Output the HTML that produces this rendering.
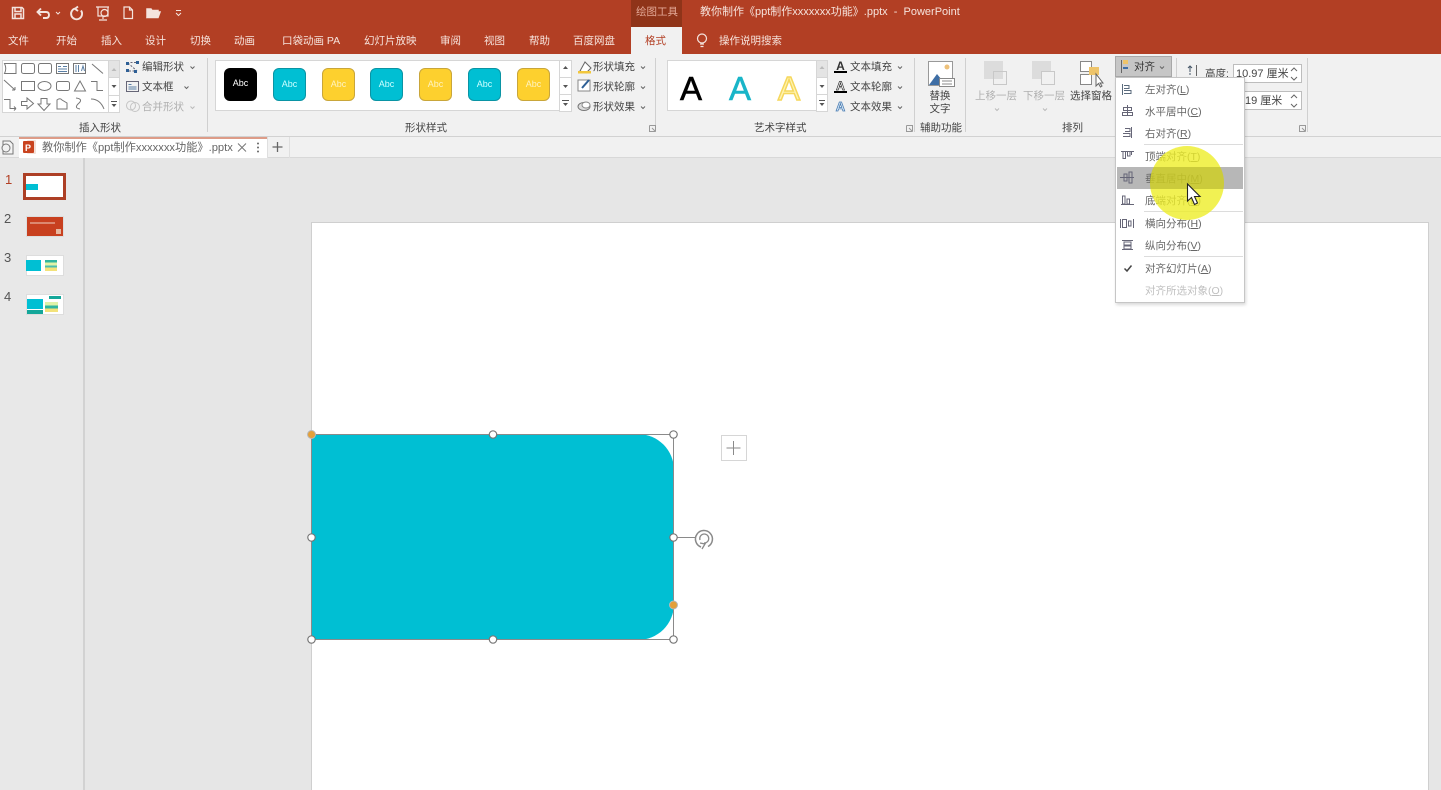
<!DOCTYPE html>
<html lang="zh"><head><meta charset="utf-8"><title>PowerPoint</title>
<style>
html,body{margin:0;padding:0;background:#e6e6e6;height:790px;overflow:hidden}
body{width:1441px;height:790px;position:relative;overflow:hidden;font-family:"Liberation Sans","Noto Sans CJK SC",sans-serif;font-size:10.5px;color:#444;filter:blur(.3px)}
div{position:absolute;box-sizing:border-box}
.t{white-space:nowrap;line-height:16px;height:16px;margin-top:1px}
.n{margin-top:0}
.w{color:#f6e3dc}
.g{color:#b0b0b0}
.m{color:#666}
.c{text-align:center}
svg{position:absolute;left:0;top:0}
</style></head><body>
<div style="left:0;top:0;width:1441px;height:54px;background:#b23f24"></div>
<div style="left:631px;top:0;width:51px;height:27px;background:#8f3419"></div>
<div style="left:631px;top:27px;width:51px;height:27px;background:#f1f1f1"></div>
<div style="left:0;top:54px;width:1441px;height:83px;background:#f1f1f1;border-bottom:1px solid #d2d2d2"></div>
<div style="left:0;top:137px;width:1441px;height:21px;background:#f1f1f1;border-bottom:1px solid #d8d8d8"></div>
<div style="left:19px;top:137px;width:248px;height:21px;background:#fff;border-top:2px solid #dd9c88"></div>
<div style="left:0;top:158px;width:85px;height:632px;background:#e8e8e8;border-right:2px solid #d2d2d2"></div>
<div style="left:311px;top:222px;width:1118px;height:568px;background:#fff;border:1px solid #cfcfcf;border-bottom:0"></div>

<!-- title -->
<div class="t w n" style="left:636px;top:4px;color:#e3a896">绘图工具</div>
<div class="t w n" style="left:700px;top:4px;font-size:11px">教你制作《ppt制作xxxxxxx功能》.pptx&nbsp; -&nbsp; PowerPoint</div>
<!-- tabs -->
<div class="t w" style="left:8px;top:32px">文件</div>
<div class="t w" style="left:56px;top:32px">开始</div>
<div class="t w" style="left:101px;top:32px">插入</div>
<div class="t w" style="left:145px;top:32px">设计</div>
<div class="t w" style="left:190px;top:32px">切换</div>
<div class="t w" style="left:234px;top:32px">动画</div>
<div class="t w" style="left:282px;top:32px">口袋动画 PA</div>
<div class="t w" style="left:364px;top:32px">幻灯片放映</div>
<div class="t w" style="left:440px;top:32px">审阅</div>
<div class="t w" style="left:484px;top:32px">视图</div>
<div class="t w" style="left:529px;top:32px">帮助</div>
<div class="t w" style="left:573px;top:32px">百度网盘</div>
<div class="t" style="left:645px;top:32px;color:#b23f24">格式</div>
<div class="t w" style="left:719px;top:32px">操作说明搜索</div>

<!-- galleries -->
<div style="left:2px;top:60px;width:118px;height:53px;background:#fff;border:1px solid #d6d6d6"></div>
<div style="left:215px;top:60px;width:357px;height:51px;background:#fff;border:1px solid #d6d6d6"></div>
<div style="left:667px;top:60px;width:161px;height:51px;background:#fff;border:1px solid #d6d6d6"></div>

<!-- ribbon text -->
<div class="t" style="left:142px;top:58px">编辑形状</div>
<div class="t" style="left:142px;top:78px">文本框</div>
<div class="t g" style="left:142px;top:98px">合并形状</div>
<div class="t" style="left:79px;top:119px">插入形状</div>
<div class="t" style="left:405px;top:119px">形状样式</div>
<div class="t" style="left:593px;top:58px">形状填充</div>
<div class="t" style="left:593px;top:78px">形状轮廓</div>
<div class="t" style="left:593px;top:98px">形状效果</div>
<div class="t" style="left:754px;top:119px">艺术字样式</div>
<div class="t" style="left:850px;top:58px">文本填充</div>
<div class="t" style="left:850px;top:78px">文本轮廓</div>
<div class="t" style="left:850px;top:98px">文本效果</div>
<div class="t c" style="left:925px;top:87px;width:30px">替换</div>
<div class="t c" style="left:925px;top:100px;width:30px">文字</div>
<div class="t" style="left:920px;top:119px">辅助功能</div>
<div class="t g" style="left:975px;top:87px">上移一层</div>
<div class="t g" style="left:1023px;top:87px">下移一层</div>
<div class="t" style="left:1070px;top:87px">选择窗格</div>
<div class="t" style="left:1062px;top:119px">排列</div>

<!-- Style swatches -->
<div class="t c n" style="left:224px;top:68px;width:33px;height:33px;background:#000;border-radius:6px;color:#fff;line-height:31px;font-size:9px">Abc</div>
<div class="t c n" style="left:273px;top:68px;width:33px;height:33px;background:#00bfd3;border:1px solid #0a94a4;border-radius:6px;color:#cff;line-height:30px;font-size:9px">Abc</div>
<div class="t c n" style="left:322px;top:68px;width:33px;height:33px;background:#fdd02e;border:1px solid #c9a63a;border-radius:6px;color:#fff3c0;line-height:30px;font-size:9px">Abc</div>
<div class="t c n" style="left:370px;top:68px;width:33px;height:33px;background:#00bfd3;border:1px solid #0a94a4;border-radius:6px;color:#cff;line-height:30px;font-size:9px">Abc</div>
<div class="t c n" style="left:419px;top:68px;width:33px;height:33px;background:#fdd02e;border:1px solid #c9a63a;border-radius:6px;color:#fff3c0;line-height:30px;font-size:9px">Abc</div>
<div class="t c n" style="left:468px;top:68px;width:33px;height:33px;background:#00bfd3;border:1px solid #0a94a4;border-radius:6px;color:#cff;line-height:30px;font-size:9px">Abc</div>
<div class="t c n" style="left:517px;top:68px;width:33px;height:33px;background:#fdd02e;border:1px solid #c9a63a;border-radius:6px;color:#fff3c0;line-height:30px;font-size:9px">Abc</div>

<!-- WordArt -->
<div class="t n" style="left:680px;top:72px;font-size:33px;line-height:34px;height:34px;color:#000;-webkit-text-stroke:.6px #000">A</div>
<div class="t n" style="left:729px;top:72px;font-size:33px;line-height:34px;height:34px;color:#19b5c8;-webkit-text-stroke:.6px #19b5c8">A</div>
<div class="t n" style="left:778px;top:72px;font-size:33px;line-height:34px;height:34px;color:#fff3b0;-webkit-text-stroke:1.5px #f5d75c">A</div>

<!-- size -->
<div class="t" style="left:1205px;top:65px">高度:</div>
<div style="left:1233px;top:64px;width:69px;height:19px;background:#fff;border:1px solid #bdbdbd"></div>
<div style="left:1233px;top:91px;width:69px;height:19px;background:#fff;border:1px solid #bdbdbd"></div>
<div class="t" style="left:1236px;top:65px;font-size:11px">10.97 厘米</div>
<div class="t" style="left:1245px;top:92px;font-size:11px">19 厘米</div>

<!-- Align button -->
<div style="left:1115px;top:56px;width:57px;height:21px;background:#c6c6c6;border:1px solid #a8a8a8"></div>
<div class="t" style="left:1134px;top:58px;color:#333">对齐</div>

<!-- doc tab -->
<div class="t m" style="left:42px;top:139px;font-size:11.2px">教你制作《ppt制作xxxxxxx功能》.pptx</div>

<!-- thumbs -->
<div class="t" style="left:5px;top:171px;font-size:13px;color:#b23f24">1</div>
<div class="t" style="left:4px;top:210px;font-size:13px;color:#555">2</div>
<div class="t" style="left:4px;top:249px;font-size:13px;color:#555">3</div>
<div class="t" style="left:4px;top:288px;font-size:13px;color:#555">4</div>
<div style="left:23px;top:173px;width:43px;height:27px;background:#fff;border:3px solid #ad3f25"></div>
<div style="left:26px;top:184px;width:12px;height:6px;background:#00bfd3"></div>
<div style="left:26px;top:216px;width:38px;height:21px;background:#c8401f;border:1px solid #ddd"></div>
<div style="left:26px;top:255px;width:38px;height:21px;background:#fff;border:1px solid #ddd"></div>
<div style="left:26px;top:294px;width:38px;height:21px;background:#fff;border:1px solid #ddd"></div>
<div style="left:26px;top:260px;width:15px;height:11px;background:#00bfd3"></div>
<div style="left:45px;top:260px;width:12px;height:11px;background:linear-gradient(#2fb5a0 0 25%,#dff2a8 25% 50%,#4bbfb0 50% 70%,#f3e27a 70%)"></div>
<div style="left:27px;top:299px;width:16px;height:10px;background:#00bfd3"></div>
<div style="left:27px;top:310px;width:16px;height:4px;background:#14a79a"></div>
<div style="left:45px;top:302px;width:13px;height:10px;background:linear-gradient(#dff2a8 0 35%,#2fb5a0 35% 65%,#f3e27a 65%)"></div>
<div style="left:49px;top:296px;width:12px;height:3px;background:#14a79a"></div>

<!-- main shape -->
<div style="left:312px;top:434px;width:362px;height:206px;background:#00bfd3;border-radius:0 36px 36px 0"></div>
<div style="left:721px;top:435px;width:26px;height:26px;border:1px solid #d6d6d6;background:#fff"></div>

<!-- Icons -->
<svg width="1441" height="790" viewBox="0 0 1441 790" fill="none">
<!-- QAT -->
<g stroke="#f4e4de" stroke-width="1.500">
<path d="M12.500 7.500H22L23.500 9V18.500H12.500Z"/><path d="M15 7.500V11.500H21V7.500M15 18.500V14H21V18.500" />
<path d="M38 12 H46 Q49 12 49 15 Q49 18 46 18 H43M41 8.500 L37.500 12 L41 15.500" stroke-width="1.900"/>
<path d="M56 12l2 2 2-2" stroke-width="1"/>
<path d="M75 8.500 A5.500 5.500 0 1 0 81 10.500M78 6.500 L75 8.800 L78 11" stroke-width="1.900"/>
<path d="M96 7H109M98 7V16H108V7M103 16V19M99 20H107" stroke-width="1.200"/><circle cx="104.500" cy="13" r="3.500" stroke-width="1.200"/>
<path d="M124 7H129.500L132.500 10V18.500H124ZM129.500 7V10H132.500" stroke-width="1.200"/>
<path d="M147 17V9H151L152 10.500H158V12M147 17.500L149 12H160L158 17.500Z" fill="#f4e4de"/>
<path d="M176 10.500H181M176 13L178.500 15.500L181 13" stroke-width="1"/>
<circle cx="702" cy="38.500" r="4.500" stroke-width="1.200"/><path d="M700 44H704M700.500 46.500H703.500" stroke-width="1.200"/>
</g>
<!-- rules between ribbon groups -->
<g stroke="#d0d0d0"><path d="M207.500 58V132M655.500 58V132M914.500 58V132M965.500 58V132M1176.500 58V132M1307.500 58V132"/></g>
<!-- gallery scrollers -->
<g stroke="#d6d6d6" fill="#fff">
<rect x="108.500" y="60.500" width="11" height="17" fill="#e4e4e4"/><rect x="108.500" y="77.500" width="11" height="18"/><rect x="108.500" y="95.500" width="11" height="17"/>
<rect x="559.500" y="60.500" width="12" height="17"/><rect x="559.500" y="77.500" width="12" height="17"/><rect x="559.500" y="94.500" width="12" height="17"/>
<rect x="816.500" y="60.500" width="11" height="17" fill="#e4e4e4"/><rect x="816.500" y="77.500" width="11" height="17"/><rect x="816.500" y="94.500" width="11" height="17"/>
</g>
<g fill="#555">
<path d="M111.500 71l2.500-3 2.500 3z" fill="#bbb"/><path d="M111.500 85l2.500 3 2.500-3z"/><path d="M111 101h6v1h-6zM111.500 104l2.500 3 2.500-3z"/>
<path d="M563 69l2.500-3 2.500 3z"/><path d="M563 85l2.500 3 2.500-3z"/><path d="M562 100h7v1h-7zM563 103l2.500 3 2.500-3z"/>
<path d="M819.500 69l2.500-3 2.500 3z" fill="#bbb"/><path d="M819.500 85l2.500 3 2.500-3z"/><path d="M819 100h6v1h-6zM819.500 103l2.500 3 2.500-3z"/>
</g>
<!-- shape gallery -->
<g stroke="#777" stroke-width="1">
<path d="M4.500 63.500H16V73.500H4.500Q7 68.500 4.500 63.500Z"/>
<rect x="21.500" y="63.500" width="13" height="10" rx="2"/>
<rect x="38.500" y="63.500" width="13" height="10" rx="2"/>
<rect x="56.500" y="63.500" width="12" height="10"/><path d="M58 66.500h3M58 69h9M58 71.500h9M63 66.500h4" stroke="#5a7fa5"/>
<rect x="73.500" y="63.500" width="12" height="10"/><path d="M76 65v7M78.500 65v7M81.500 71l1.500-5 1.500 5" stroke="#5a7fa5"/>
<path d="M92 64L103 73.500"/>
<path d="M4 80L15 90M15 90H12M15 90V87" />
<rect x="21.500" y="81.500" width="13" height="9"/>
<ellipse cx="44.500" cy="86" rx="6.500" ry="4.500"/>
<rect x="56.500" y="81.500" width="13" height="9" rx="2"/>
<path d="M80 81L85.500 91H74.500Z"/>
<path d="M91 81.500H97V90.500H103"/>
<path d="M4 99.500H10V108.500H16M16 108.500l-2-2M16 108.500l-2 2"/>
<path d="M21.500 101.500H27V98L33.500 103.500L27 109V105.500H21.500Z"/>
<path d="M41 98.500H47V104H50L44 110.500L38 104H41Z"/>
<path d="M57 100Q60 97.500 62 100L67 103V109H57Z"/>
<path d="M76 98Q84 99 78 104Q74 108 80 109"/>
<path d="M91 99Q100 99 104 109"/>
</g>
<!-- side icons -->
<g stroke="#667" stroke-width="1">
<path d="M127 62.500H138M129 71H136M128 63L137 71" stroke-dasharray="2 1.500"/>
<g fill="#2e5f95" stroke="none"><rect x="126" y="62" width="3" height="3"/><rect x="136" y="61" width="3" height="3"/><rect x="134" y="70" width="3" height="3"/><rect x="126" y="69" width="3" height="3"/></g>
<rect x="126.500" y="81.500" width="12" height="10"/><path d="M128.500 84.500h3M128.500 87h8M128.500 89h8" stroke="#5a7fa5"/>
</g>
<g stroke="#c4c4c4"><circle cx="131" cy="105.500" r="4.500"/><circle cx="135" cy="107" r="4.500"/></g>
<g stroke="#666" stroke-width="1" fill="none">
<path d="M190.500 66.500l2 2 2-2M184.500 86.500l2 2 2-2M641 66.500l2 2 2-2M641 86.500l2 2 2-2M641 106.500l2 2 2-2M898 66.500l2 2 2-2M898 86.500l2 2 2-2M898 106.500l2 2 2-2M1160 66.500l2 2 2-2"/>
<path d="M190.500 106.500l2 2 2-2" stroke="#bbb"/><path d="M995 108.500l2 2 2-2M1043 108.500l2 2 2-2" stroke="#bbb"/>
</g>
<!-- fill/outline icons -->
<path d="M580 71L585 62L591 68L586 73Z" stroke="#666" fill="#fff"/><rect x="578" y="71" width="13" height="2.500" fill="#f2c73d"/>
<rect x="578" y="80" width="12" height="11" fill="#fff" stroke="#888"/><path d="M582 88L589 80" stroke="#2e5f95" stroke-width="2"/>
<ellipse cx="584" cy="106.500" rx="6" ry="4" fill="#ddd" stroke="#777"/><ellipse cx="586" cy="105" rx="4" ry="3" fill="#fff" stroke="#888"/>
<g font-family="Liberation Sans" font-weight="bold" font-size="13" text-anchor="middle">
<text x="840.500" y="70" fill="#333" font-size="12">A</text><rect x="834" y="71" width="13" height="2" fill="#000"/>
<text x="840.500" y="90" fill="#fff" stroke="#333" stroke-width=".7" font-size="12">A</text><rect x="834" y="91" width="13" height="2" fill="#000"/>
<text x="840.500" y="111" fill="#dbe8f5" stroke="#4b7fb5" stroke-width=".8">A</text>
</g>
<g stroke="#999"><path d="M649.500 125.500h6v6M649.500 125.500v6h6M652 128l3 3"/><path d="M906.500 125.500h6v6M906.500 125.500v6h6M909 128l3 3"/><path d="M1299.500 125.500h6v6M1299.500 125.500v6h6M1302 128l3 3"/></g>
<!-- alt text -->
<rect x="928.500" y="61.500" width="24" height="24" fill="#fff" stroke="#999"/><path d="M929 85L937 74L946 85Z" fill="#3e6ea5"/><circle cx="947" cy="67" r="2.500" fill="#eec17a"/><rect x="939.500" y="78.500" width="15" height="8" fill="#fff" stroke="#888"/><path d="M942 81h10M942 84h10" stroke="#888"/>
<!-- arrange -->
<rect x="984" y="61" width="19" height="18" fill="#dcdcdc"/><rect x="993.500" y="71.500" width="13" height="13" fill="none" stroke="#c8c8c8"/>
<rect x="1032" y="61" width="19" height="18" fill="#dcdcdc"/><rect x="1041.500" y="71.500" width="13" height="13" fill="#f1f1f1" stroke="#c8c8c8"/>
<rect x="1080.500" y="61.500" width="11" height="10" fill="#fff" stroke="#888"/><rect x="1080.500" y="74.500" width="11" height="10" fill="#fff" stroke="#888"/><rect x="1089" y="67" width="10" height="8" fill="#eec46a"/><path d="M1096 74V86L1098.500 83.500L1100.500 87L1102 86L1100 83H1103Z" fill="#fff" stroke="#666"/>
<!-- align icon -->
<path d="M1121.500 60V73" stroke="#666"/><rect x="1123" y="60" width="5" height="4" fill="#eec46a"/><path d="M1123 68H1128" stroke="#3e6ea5" stroke-width="2"/>
<!-- height icon -->
<path d="M1190 72V66M1188 68l2-2 2 2M1190 73v2" stroke="#456" /><path d="M1196.500 65V76" stroke="#666"/>
<g stroke="#666" fill="none"><path d="M1291 71l3-3 3 3M1291 77l3 3 3-3M1291 98l3-3 3 3M1291 104l3 3 3-3"/></g>
<!-- doc-tab icons -->
<path d="M3 141H10L13 144V154H3Z" stroke="#777" fill="#f4f4f4"/><circle cx="6" cy="148" r="4" stroke="#777" fill="#f1f1f1"/>
<rect x="27" y="140" width="9" height="14" rx="1" fill="#f3e0d8"/><rect x="23" y="141" width="11" height="12" rx="1" fill="#c9431f"/><text x="25" y="151" font-family="Liberation Sans" font-weight="bold" font-size="9" fill="#fff">P</text>
<path d="M238 143.500L246 151.500M246 143.500L238 151.500" stroke="#777"/>
<circle cx="258" cy="143.500" r="1" fill="#666"/><circle cx="258" cy="147.500" r="1" fill="#666"/><circle cx="258" cy="151.500" r="1" fill="#666"/>
<path d="M272.500 147H282.500M277.500 142V152" stroke="#666" stroke-width="1.300"/>
<path d="M267.500 137V158M289.500 137V158" stroke="#dfdfdf"/>
<!-- thumbnail deco -->
<path d="M30 223H55" stroke="#f0d0c0" stroke-width="1"/><rect x="56" y="229" width="5" height="5" fill="#e8b8a0"/>
<!-- selection -->
<rect x="311.500" y="434.500" width="362" height="205" stroke="#8a8a8a"/>
<path d="M674 537.500H695" stroke="#8a8a8a"/>
<g fill="#fff" stroke="#777" stroke-width="1.200">
<circle cx="493" cy="434.500" r="3.700"/><circle cx="673.500" cy="434.500" r="3.700"/><circle cx="311.500" cy="537.500" r="3.700"/><circle cx="673.500" cy="537.500" r="3.700"/><circle cx="311.500" cy="639.500" r="3.700"/><circle cx="493" cy="639.500" r="3.700"/><circle cx="673.500" cy="639.500" r="3.700"/>
</g>
<circle cx="311.500" cy="434.500" r="4" fill="#e3a03a" stroke="#b9b9b9"/><circle cx="673.500" cy="605" r="4" fill="#e3a03a" stroke="#b9b9b9"/>
<g transform="translate(0,-1)"><path d="M701 548A8.500 8.500 0 1 1 708 547.500" stroke="#8a8a8a" stroke-width="1.500"/><path d="M700 541A4.500 4.500 0 1 1 704 544M702 550L705 545L700 544" stroke="#8a8a8a" stroke-width="1.300"/></g>
<path d="M733.500 441V455M726.500 448H740.500" stroke="#8a8a8a"/>
</svg>

<!-- dropdown -->
<div style="left:1115px;top:77px;width:130px;height:226px;background:#fff;border:1px solid #c6c6c6;box-shadow:1px 2px 3px rgba(0,0,0,.15)"></div>
<div style="left:1117px;top:167px;width:126px;height:22px;background:#b7b7b7"></div>
<svg width="1441" height="790" viewBox="0 0 1441 790" fill="none">
<g stroke="#dcdcdc"><path d="M1144 144.500H1243M1144 211.500H1243M1144 256.500H1243"/></g>
<g stroke="#667" stroke-width="1">
<path d="M1122.500 84V95M1124 85.500H1129V88.500H1124M1124 90.500H1131V93.500H1124" stroke="#5b6b7d"/>
<path d="M1127.500 105V116M1123.500 107.500H1131.500V110.500H1123.500ZM1122.500 112.500H1132.500V115.500H1122.500Z"/>
<path d="M1131.500 127V138M1125 128.500H1130V131.500H1125M1123 133.500H1130V136.500H1123"/>
<path d="M1121 151.500H1134M1123 152V158.500H1125.500V152M1127.500 152V156H1130V152M1131.500 152V155"/>
<path d="M1120 177.500H1134M1124 174V181H1127V174ZM1129 172H1132V183H1129Z"/>
<path d="M1121 204.500H1134M1122.500 196V204H1125V196ZM1127 199V204H1129.500V199Z"/>
<path d="M1120.500 219V228M1133.500 219V228M1122.500 219.500H1126.500V227.500H1122.500ZM1128.500 221H1131V226H1128.500Z"/>
<path d="M1122 240.500H1133M1122 249.500H1133M1124 242H1131V245H1124ZM1124 246H1131V249H1124Z"/>
</g>
<path d="M1124.500 268.500L1127 271L1131.500 265.500" stroke="#444" stroke-width="1.500"/>
</svg>
<div class="t m" style="left:1145px;top:81px">左对齐(<u>L</u>)</div>
<div class="t m" style="left:1145px;top:103px">水平居中(<u>C</u>)</div>
<div class="t m" style="left:1145px;top:125px">右对齐(<u>R</u>)</div>
<div class="t m" style="left:1145px;top:148px">顶端对齐(<u>T</u>)</div>
<div class="t m" style="left:1145px;top:170px">垂直居中(<u>M</u>)</div>
<div class="t m" style="left:1145px;top:192px">底端对齐(<u>B</u>)</div>
<div class="t m" style="left:1145px;top:215px">横向分布(<u>H</u>)</div>
<div class="t m" style="left:1145px;top:237px">纵向分布(<u>V</u>)</div>
<div class="t m" style="left:1145px;top:260px">对齐幻灯片(<u>A</u>)</div>
<div class="t" style="left:1145px;top:282px;color:#c0c0c0">对齐所选对象(<u>O</u>)</div>

<!-- pointer spotlight -->
<div style="left:1150px;top:146px;width:74px;height:74px;border-radius:50%;overflow:hidden;background:rgba(238,238,40,.8)">
<div style="left:0;top:21px;width:74px;height:22px;background:rgba(60,60,0,.14)"></div>
</div>
<svg width="1441" height="790" viewBox="0 0 1441 790" fill="none">
<path d="M1187.500 184V201L1191.500 197.500L1194.500 204.500L1197.500 203L1194.500 196.500H1200Z" fill="#fff" stroke="#222" stroke-width="1.100"/>
</svg>
</body></html>
